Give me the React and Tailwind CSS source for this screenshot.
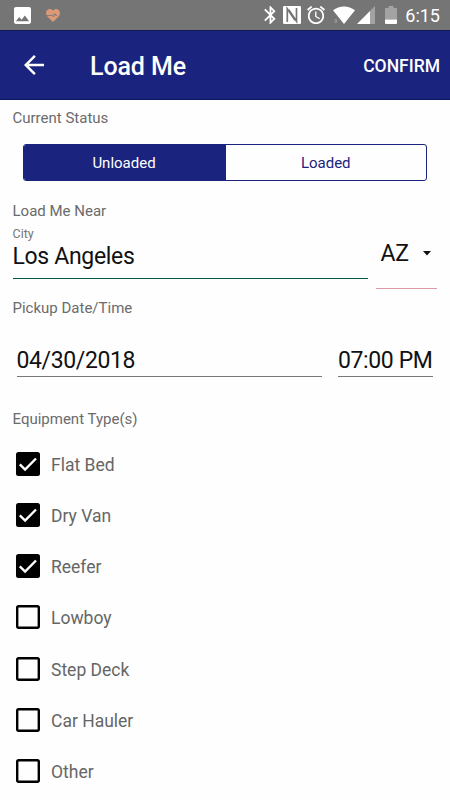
import React, { useState } from 'react';

const StatusBar = () => (
  <div className="h-[30px] bg-[#757575] flex items-center justify-between pl-[14px] pr-[10px]">
    <div className="flex items-center gap-[15px]">
      <svg width="17" height="17" viewBox="0 0 18 18" fill="#fff">
        <path d="M18 16V2c0-1.100-.9-2-2-2H2C.9 0 0 .9 0 2v14c0 1.100.9 2 2 2h14c1.100 0 2-.9 2-2zM5.500 10.500l2.500 3.010L11.500 9l4.500 6H2l3.500-4.500z" />
      </svg>
      <svg width="14" height="13" viewBox="0 0 14 13">
        <path d="M7 13L1.200 7.200C-.4 5.500-.3 2.600 1.100 1.200 2.700-.4 5.400-.3 7 1.700 8.600-.3 11.300-.4 12.900 1.200c1.400 1.400 1.500 4.300-.1 6L7 13z" fill="#dc9a76" />
        <path d="M0 6.500h5.500l1-1 1 2.500L9 4.500l.8 2H11" fill="none" stroke="#757575" strokeWidth=".8" />
      </svg>
    </div>

    <div className="flex items-center">
      <svg width="12" height="18" viewBox="5 2 13 20" fill="#fff">
        <path d="M17.710 7.710L12 2h-1v7.590L6.410 5 5 6.410 10.590 12 5 17.590 6.410 19 11 14.410V22h1l5.710-5.710-4.300-4.290 4.300-4.290zM13 5.830l1.880 1.880L13 9.590V5.830zm1.880 10.460L13 18.170v-3.760l1.880 1.880z" />
      </svg>
      <svg className="ml-[7px]" width="18" height="18" viewBox="0 0 18 18">
        <rect width="18" height="18" rx="1.200" fill="#fff" />
        <path d="M4.300 16V2.800l7.700 11.400M13.500 2v13.200L5.800 3.800" fill="none" stroke="#757575" strokeWidth="1.700" />
      </svg>
      <svg className="ml-[6px]" width="18" height="18" viewBox="2 2 20 20" fill="#fff">
        <path d="M22 5.720l-4.600-3.860-1.290 1.530 4.600 3.860L22 5.720zM7.880 3.390L6.600 1.860 2 5.710l1.290 1.530 4.590-3.850zM12.500 8H11v6l4.750 2.850.75-1.230-4-2.370V8zM12 4c-4.970 0-9 4.030-9 9s4.020 9 9 9c4.970 0 9-4.030 9-9s-4.030-9-9-9zm0 16c-3.870 0-7-3.130-7-7s3.130-7 7-7 7 3.130 7 7-3.130 7-7 7z" />
      </svg>
      <svg className="ml-[8px]" width="22" height="18" viewBox="0 0 22 18">
        <path d="M11 18L0 4.300C6.300-.9 15.700-.9 22 4.300L11 18z" fill="#fff" />
        <path d="M2 13.500h1.500v3H2z" fill="none" stroke="#a0a0a0" strokeWidth=".8" />
      </svg>
      <svg className="ml-[2px]" width="18" height="18" viewBox="0 0 18 18">
        <path d="M13 5L18 0v18h-5z" fill="#a3a3a3" />
        <path d="M0 18L13 5v13z" fill="#fff" />
      </svg>
      <svg className="ml-[10px]" width="12" height="18" viewBox="0 0 12 18">
        <path d="M0 13.500V3q0-1 1-1h2.500V0h5v2H11q1 0 1 1v10.500z" fill="#a3a3a3" />
        <path d="M0 13.500h12V17q0 1-1 1H1q-1 0-1-1z" fill="#fff" />
      </svg>
      <span className="ml-[8px] pt-px text-[18px] leading-[30px] text-white">6:15</span>
    </div>
  </div>
);

const AppBar = () => (
  <div className="h-[70px] bg-[#1a237e] border-t border-b border-t-[#10175c] border-b-[#10175c] flex items-center text-white pl-[24px] pr-[10px]">
    <svg width="20" height="20" viewBox="4 4 16 16" fill="#fff">
      <path d="M20 11H7.830l5.590-5.590L12 4l-8 8 8 8 1.410-1.410L7.830 13H20v-2z" />
    </svg>
    <h1 className="ml-[46px] pt-[3px] text-[25px] font-medium tracking-[-0.100px]">Load Me</h1>
    <button className="ml-auto pt-[2px] text-[17.500px] font-medium">CONFIRM</button>
  </div>
);

const Label = ({ children }) => (
  <div className="h-5 text-[15px] leading-5 text-[#6b6b6b]">{children}</div>
);

const EquipmentRow = ({ label, checked, onClick }) => (
  <div onClick={onClick} className="h-[51.250px] flex items-center gap-[11.500px] pl-[3px]">
    <svg width="24" height="24" viewBox="0 0 24 24">
      {checked ? (
        <>
          <rect width="24" height="24" rx="2.500" fill="#000" />
          <path d="M3.800 12.300l5.300 5.200L20 6.500" fill="none" stroke="#fff" strokeWidth="2.400" />
        </>
      ) : (
        <rect x="1.200" y="1.200" width="21.600" height="21.600" rx="1.500" fill="none" stroke="#000" strokeWidth="2.400" />
      )}
    </svg>
    <span className="pt-[2px] text-[17.500px] text-[#666]">{label}</span>
  </div>
);

const equipment = ['Flat Bed', 'Dry Van', 'Reefer', 'Lowboy', 'Step Deck', 'Car Hauler', 'Other'];

const App = () => {
  const [selected, setSelected] = useState(['Flat Bed', 'Dry Van', 'Reefer']);

  const toggle = (item) => {
    setSelected(selected.includes(item) ? selected.filter((s) => s !== item) : [...selected, item]);
  };

  return (
    <div className="w-[450px] h-[800px] overflow-hidden bg-[#fefefe] font-[Roboto,sans-serif]">
      <StatusBar />
      <AppBar />

      <div className="pl-[12.500px] pr-[13px] pt-2">
        {/* Current status */}
        <Label>Current Status</Label>
        <div className="mt-4 ml-[10px] mr-[10px] h-[37px] flex rounded-[3px] border border-[#1a237e] overflow-hidden text-[15px]">
          <button className="w-[202px] pt-[2px] pr-px bg-[#1a237e] text-white">Unloaded</button>
          <button className="flex-1 pt-[2px] text-[#1a237e]">Loaded</button>
        </div>

        {/* Location */}
        <div className="mt-5">
          <Label>Load Me Near</Label>
        </div>
        <div className="flex gap-2">
          <div className="w-[355px] h-[58px] border-b border-[#00594a]">
            <div className="mt-[5px] text-[12.500px] leading-4 text-[#757575]">City</div>
            <div className="pt-px text-[23px] leading-[28px] tracking-[-0.320px] text-[#111]">Los Angeles</div>
          </div>
          <div className="w-[61px] h-[68px] pl-[5px] pt-[17px] border-b border-[#dc9ca4] flex items-start justify-between">
            <span className="pt-px text-[23px] leading-[30px] tracking-[-0.320px] text-[#111]">AZ</span>
            <svg className="mt-[13px] mr-[6px]" width="8" height="5" viewBox="0 0 8 5">
              <path d="M0 0h8L4 4.500z" fill="#111" />
            </svg>
          </div>
        </div>

        {/* Pickup */}
        <div className="mt-[9px]">
          <Label>Pickup Date/Time</Label>
        </div>
        <div className="mt-[26px] ml-1 mr-1 flex justify-between text-[23px] leading-[34px] tracking-[-0.380px] text-[#111]">
          <div className="w-[305px] h-[33px] border-b border-[#777]">04/30/2018</div>
          <div className="w-[95px] h-[33px] border-b border-[#777] whitespace-nowrap">07:00 PM</div>
        </div>

        {/* Equipment */}
        <div className="mt-[32px]">
          <Label>Equipment Type(s)</Label>
        </div>
        <div className="mt-[9px]">
          {equipment.map((item) => (
            <EquipmentRow
              key={item}
              label={item}
              checked={selected.includes(item)}
              onClick={() => toggle(item)}
            />
          ))}
        </div>
      </div>
    </div>
  );
};

export default App;
